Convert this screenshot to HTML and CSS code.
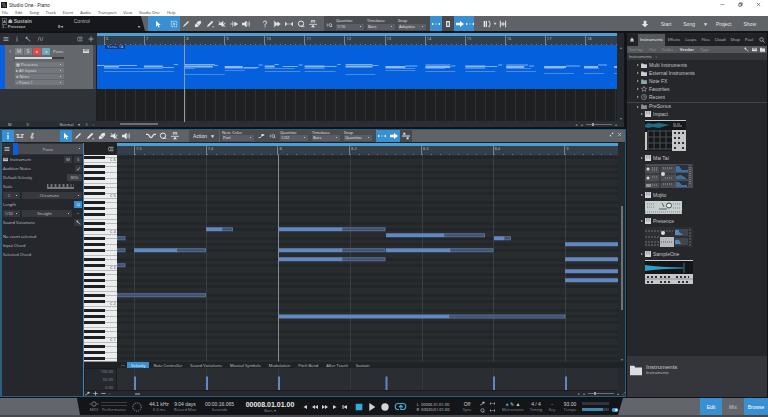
FILE: index.html
```
<!DOCTYPE html>
<html lang="en">
<head>
  <meta charset="UTF-8">
  <meta name="viewport" content="width=device-width, initial-scale=1.0">
  <title>Studio One - Piano</title>
  <link rel="stylesheet" href="styles.css">
</head>
<body>

  <!-- Icon sprite -->
  <svg class="sprite" aria-hidden="true">
    <symbol id="i-arrow" viewBox="0 0 12 12"><path d="M3 1v9l2.300-2 1.500 3.400 1.700-.8L7 7.400h3z" fill="currentColor"/></symbol>
    <symbol id="i-range" viewBox="0 0 12 12"><path d="M2 2h8v8H2z" fill="none" stroke="currentColor" stroke-dasharray="2 1"/><path d="M6 4v4M4 6h4" stroke="currentColor"/></symbol>
    <symbol id="i-pencil" viewBox="0 0 12 12"><path d="M1.500 10.500L3 7.500 9 1.500l1.500 1.500-6 6z" fill="currentColor"/></symbol>
    <symbol id="i-eraser" viewBox="0 0 12 12"><path d="M1 8l5-6 4-1 1 3-5 6-4 1z" fill="currentColor"/><path d="M4 5l3 3" stroke="#5c5f64"/></symbol>
    <symbol id="i-paint" viewBox="0 0 12 12"><path d="M1.500 10.500l1-3 6.500-6.500L11 3 4.500 9.500z" fill="currentColor"/><path d="M9 11h2.500V8.500z" fill="currentColor"/></symbol>
    <symbol id="i-mute" viewBox="0 0 12 12"><path d="M1 5h3l4-4v10L4 7.500H1z" fill="currentColor"/><path d="M1 2l10 8M11 4L7 9" stroke="currentColor" stroke-width="1.300"/></symbol>
    <symbol id="i-bend" viewBox="0 0 12 12"><path d="M0 6h12M4 2v8M7 3l4 3-4 3z" fill="currentColor" stroke="currentColor"/></symbol>
    <symbol id="i-sound" viewBox="0 0 12 12"><path d="M0 4h3l4-3v10L3 8H0z" fill="currentColor"/><path d="M8.500 3.500q2 2.500 0 5M10.500 2q2.500 4 0 8" fill="none" stroke="currentColor"/></symbol>
    <symbol id="i-help" viewBox="0 0 12 12"><path d="M3.500 4q0-2.500 2.500-2.500T8.500 4Q8.500 5.300 6 6.500V8.500M6 9.500V11" fill="none" stroke="currentColor" stroke-width="1.400"/></symbol>
    <symbol id="i-split" viewBox="0 0 12 12"><path d="M2 1v10M3 3l4 3-4 3zM7 3l4 3-4 3z" fill="currentColor" stroke="currentColor"/></symbol>
    <symbol id="i-fit" viewBox="0 0 12 12"><path d="M.5 3v6M11.500 3v6" stroke="currentColor" stroke-width="1.500"/><path d="M1 4l3.500 2L1 8zM11 4L7.500 6 11 8zM5.500 5h1v2h-1z" fill="currentColor"/></symbol>
    <symbol id="i-q" viewBox="0 0 12 12"><circle cx="6" cy="5.500" r="4" fill="none" stroke="currentColor" stroke-width="1.500"/><path d="M6 9.500h5" stroke="currentColor" stroke-width="1.300"/></symbol>
    <symbol id="i-scale" viewBox="0 0 12 12"><path d="M3.500 1v3M6 1v3M8.500 1v3M3 1h6M0 6.500h12" fill="none" stroke="currentColor" stroke-width="1.200"/><path d="M6 7l3 4H3z" fill="currentColor"/></symbol>
    <symbol id="i-divide" viewBox="0 0 12 12"><path d="M0 6h12" stroke="currentColor" stroke-width="1.500"/><path d="M2 1h3v3H2zM7 8h3v3H7z" fill="currentColor"/></symbol>
    <symbol id="i-drum" viewBox="0 0 12 12"><path d="M0 4h5M7 4h5M1 8h10M3 4v4M9 4v4" stroke="currentColor" stroke-width="1.300"/></symbol>
    <symbol id="i-score" viewBox="0 0 12 12"><path d="M6 11V2q3-1 2 2L5 6q-2 3 1 3t2-2" fill="none" stroke="currentColor" stroke-width="1.200"/></symbol>
    <symbol id="i-iq" viewBox="0 0 12 12"><path d="M1.500 3v6" stroke="currentColor" stroke-width="1.200"/><circle cx="7.500" cy="6" r="2.800" fill="none" stroke="currentColor" stroke-width="1.200"/><path d="M8 9h4" stroke="currentColor"/></symbol>
    <symbol id="i-snap" viewBox="0 0 12 12"><path d="M0 4l3 2-3 2zM12 4L9 6l3 2z" fill="currentColor"/><path d="M4.500 6h3" stroke="currentColor" stroke-dasharray="1 1"/></symbol>
    <symbol id="i-follow" viewBox="0 0 12 12"><path d="M0 4h6V1.500L12 6l-6 4.500V8H0z" fill="currentColor"/></symbol>
    <symbol id="i-box" viewBox="0 0 12 12"><path d="M4 2.500h4v7H4z" fill="none" stroke="currentColor" stroke-width="1.800"/></symbol>
    <symbol id="i-marks" viewBox="0 0 12 12"><path d="M2 1.500v9M5 1.500v9" stroke="currentColor" stroke-width="2"/><path d="M8 2h2v3l1.500 1L10 7v3H8" fill="none" stroke="currentColor" stroke-width="1.300"/></symbol>
    <symbol id="i-hgrid" viewBox="0 0 12 12"><path d="M2 1v10M10 1v10M2 6h8M6 3v6" stroke="currentColor" stroke-width="1.500"/></symbol>
    <symbol id="i-down" viewBox="0 0 12 12"><path d="M4 1h4v5h3l-5 5-5-5h3z" fill="currentColor"/></symbol>
    <symbol id="i-menu" viewBox="0 0 12 12"><path d="M1 3h10M1 6h10M1 9h10" stroke="currentColor" stroke-width="1.600"/></symbol>
    <symbol id="i-info" viewBox="0 0 12 12"><path d="M6 1v2M6 4.500V11" stroke="currentColor" stroke-width="1.700"/></symbol>
    <symbol id="i-wrench" viewBox="0 0 12 12"><path d="M2 1l3 1v3l6 5-1 1-6-5-3-1z" fill="currentColor"/></symbol>
    <symbol id="i-curve" viewBox="0 0 12 12"><path d="M0 10C3 10 2 1.500 4 1.500S6 10 8 10s1-8.500 4-8.500" fill="none" stroke="currentColor" stroke-width="1.200"/></symbol>
    <symbol id="i-step" viewBox="0 0 12 12"><path d="M0 9h4l4-5h4" fill="none" stroke="currentColor" stroke-width="1.600"/><path d="M6 2h4v4H6z" fill="currentColor"/></symbol>
    <symbol id="i-wave" viewBox="0 0 12 12"><path d="M0 4h2c2 0 2 4 4 4s2-4 4-4h2" fill="none" stroke="currentColor" stroke-width="1.500"/></symbol>
    <symbol id="i-list" viewBox="0 0 12 12"><path d="M1 2.500h10M4 6h7M1 9.500h10M1 4.500v3" stroke="currentColor" stroke-width="1.500"/></symbol>
    <symbol id="i-plus" viewBox="0 0 12 12"><path d="M6 1v10M1 6h10" stroke="currentColor" stroke-width="1.800"/></symbol>
    <symbol id="i-minus" viewBox="0 0 12 12"><path d="M1 6h10" stroke="currentColor" stroke-width="1.800"/></symbol>
    <symbol id="i-keys" viewBox="0 0 12 12"><path d="M0 2h12v8H0z" fill="currentColor"/><path d="M2.500 2v5M5 2v5M7.500 2v5M10 2v5" stroke="#2a2c30"/></symbol>
    <symbol id="i-search" viewBox="0 0 12 12"><circle cx="5" cy="5" r="3.500" fill="none" stroke="currentColor" stroke-width="1.300"/><path d="M7.500 7.500L11 11" stroke="currentColor" stroke-width="1.600"/></symbol>
    <symbol id="i-home" viewBox="0 0 12 12"><path d="M6 1l4 5H8.500l2 3h-9l2-3H2z" fill="currentColor"/></symbol>
    <symbol id="i-folder" viewBox="0 0 14 12"><path d="M0 1h5l1 2h8v9H0z" fill="currentColor"/></symbol>
    <symbol id="i-star" viewBox="0 0 12 12"><path d="M6 .8l1.500 3.500 3.800.3-2.900 2.500.9 3.700L6 8.800l-3.300 2 .9-3.700L.7 4.600l3.800-.3z" fill="none" stroke="currentColor"/></symbol>
    <symbol id="i-clock" viewBox="0 0 12 12"><circle cx="6" cy="6" r="5" fill="none" stroke="currentColor"/><path d="M6 3v3.500h3" fill="none" stroke="currentColor"/></symbol>
    <symbol id="i-plugin" viewBox="0 0 12 12"><path d="M0 0h12v12H0z" fill="#d4d5d7"/><path d="M3 0v7M6 0v7M9 0v7" stroke="#77797d"/></symbol>
    <symbol id="i-loop" viewBox="0 0 16 12"><path d="M6 10H4Q1 10 1 6t3.500-4h7Q15 2 15 6t-3.500 4H8.500V5.500M6 7l2.500-2.500L11 7" fill="none" stroke="currentColor" stroke-width="1.500"/></symbol>
    <symbol id="i-pop" viewBox="0 0 12 12"><path d="M2 10l3-3M7 5l3-3" stroke="currentColor" stroke-width="1.500"/><path d="M6 2h4v4zM2 6v4h4z" fill="currentColor"/></symbol>
    <symbol id="i-x" viewBox="0 0 12 12"><path d="M2 2l8 8M10 2l-8 8" stroke="currentColor" stroke-width="1.300"/></symbol>
  </svg>

  <div class="app">

    <header class="window-bar">
      <div class="title">
        <svg class="app-icon" viewBox="0 0 6 6"><path d="M0 0h6v6H0z" fill="#1c1e21"/><path d="M1 2h3M2 4h3" stroke="#7b8188"/></svg>
        <span>Studio One - Piano</span>
        <div class="window-buttons">
          <button aria-label="Minimize"><svg viewBox="0 0 12 12"><path d="M1 6h10" stroke="#333"/></svg></button>
          <button aria-label="Restore"><svg viewBox="0 0 12 12"><path d="M2 4h6v6H2zM4 4V2h6v6H8" fill="none" stroke="#333" stroke-width="1.500"/></svg></button>
          <button aria-label="Close"><svg><use href="#i-x"/></svg></button>
        </div>
      </div>
      <nav class="menu">
        <a href="#">File</a><a href="#">Edit</a><a href="#">Song</a><a href="#">Track</a><a href="#">Event</a><a href="#">Audio</a><a href="#">Transport</a><a href="#">View</a><a href="#">Studio One</a><a href="#">Help</a>
      </nav>
    </header>

    <!-- Main toolbar -->
    <div class="toolbar main-toolbar">
      <div class="param-display">
        <div class="param-row"><b><i class="auto">A</i> ☗ Sustain</b><span>Control</span></div>
        <div class="param-row"><span class="param-name">1 - Presence</span><span>8 ▾</span><span class="param-end">▾</span></div>
      </div>
      <div class="tools">
        <button class="tool wide active" aria-label="Arrow"><svg><use href="#i-arrow"/></svg></button>
        <button class="tool active" aria-label="Range"><svg><use href="#i-range"/></svg></button>
        <button class="tool" aria-label="Split"><svg><use href="#i-pencil"/></svg></button>
        <button class="tool" aria-label="Eraser"><svg><use href="#i-eraser"/></svg></button>
        <button class="tool" aria-label="Paint"><svg><use href="#i-paint"/></svg></button>
        <button class="tool" aria-label="Mute"><svg><use href="#i-mute"/></svg></button>
        <button class="tool" aria-label="Bend"><svg><use href="#i-bend"/></svg></button>
        <button class="tool" aria-label="Listen"><svg><use href="#i-sound"/></svg></button>
      </div>
      <div class="tools">
        <button class="tool" aria-label="Info"><svg><use href="#i-help"/></svg></button>
        <button class="tool" aria-label="Strip silence"><svg><use href="#i-split"/></svg></button>
        <button class="tool" aria-label="Fit"><svg><use href="#i-fit"/></svg></button>
        <button class="tool" aria-label="Quantize"><svg><use href="#i-q"/></svg></button>
        <button class="tool" aria-label="Audio bend"><svg><use href="#i-scale"/></svg></button>
      </div>
      <div class="grid-settings">
        <svg class="iq"><use href="#i-iq"/></svg>
        <label>Quantize<select><option>1/16</option></select></label>
        <label>Timebase<select><option>Bars</option></select></label>
        <label>Snap<select><option>Adaptive</option></select></label>
      </div>
      <div class="tools flush">
        <button class="tool active" aria-label="Snap"><svg><use href="#i-snap"/></svg></button>
        <button class="tool dark" aria-label="Event"><svg><use href="#i-box"/></svg></button>
        <button class="tool active" aria-label="Autoscroll"><svg><use href="#i-follow"/></svg></button>
        <button class="tool narrow active" aria-label="Cursor follows"><svg><use href="#i-snap"/></svg></button>
      </div>
      <div class="tools marks">
        <button class="tool" aria-label="Marker"><svg><use href="#i-marks"/></svg></button>
        <span>▼</span>
        <button class="tool" aria-label="Layout"><svg><use href="#i-hgrid"/></svg></button>
      </div>
      <nav class="pages">
        <svg><use href="#i-down"/></svg>
        <a href="#">Start</a><a href="#">Song</a><span>▼</span><a href="#">Project</a><a href="#">Show</a>
      </nav>
    </div>

    <div class="workspace">
      <main class="work">

        <!-- Arrangement -->
        <section class="arrange">
          <div class="track-tools">
            <svg><use href="#i-menu"/></svg><svg><use href="#i-info"/></svg><svg><use href="#i-wrench"/></svg><svg class="curve"><use href="#i-curve"/></svg>
            <svg class="push"><use href="#i-list"/></svg><svg><use href="#i-plus"/></svg>
          </div>
          <div class="ruler song-ruler">
            <span>6</span><span>7</span><span>8</span><span>9</span><span>10</span><span>11</span><span>12</span><span>13</span><span>14</span><span>15</span><span>16</span><span>17</span><span>18</span>
          </div>
          <div class="corner"></div>

          <div class="track-list">
            <div class="track">
              <div class="track-head">
                <span class="track-no">1</span>
                <button class="sq">M</button><button class="sq">S</button>
                <button class="sq rec" aria-label="Record">●</button><button class="sq mon" aria-label="Monitor">◂</button>
                <span class="track-name">Piano</span>
                <svg class="push"><use href="#i-keys"/></svg>
              </div>
              <div class="fader"></div>
              <select aria-label="Instrument"><option>▦ Presence</option></select>
              <select aria-label="Input"><option>▸ All Inputs</option></select>
              <select aria-label="Output"><option>● None</option></select>
              <select aria-label="Patch"><option>♪ Piano 1</option></select>
            </div>
          </div>
          <div class="lanes">
            <div class="clip">
              <span class="clip-name">Verse 1A</span>
              <svg viewBox="0 0 521 44" preserveAspectRatio="none" stroke="#7fb0f3" fill="none">
                <path class="strong" d="M7 21.500h15M47 21.500h19M88 21.500h28M128 22h18M168 21.500h10M208 21.500h20M249 21.500h27M289 22h20M329 22h25M369 21.500h20M410 22h18M448 22h22M488 22h14M518 22h3"/>
                <path d="M0 20.500h7M22 20.500h18M66 22.500h11M77 19.500h4M88 19.500h30M117 20.500h4M147 22.500h15M162 20h4M178 19.500h4M186 21.500h15M202 20h4M228 21.500h12M241 19.500h3M249 19.500h27M276 20.500h6M309 21h12M329 20h25M355 21h4M389 21.500h12M402 20h4M410 20h22M433 21h5M470 21h14M502 20h9"/>
                <path class="faint" d="M7 23.500h59M7 26.500h70M47 23.500h15M88 23.500h10M88 29.500h40M128 23.500h32M128 25.500h20M168 23.500h30M168 26.500h36M208 23.500h20M208 26.500h31M249 29.500h30M289 23.500h30M289 25.500h30M329 23.500h20M329 26.500h30M369 23.500h20M369 26.500h30M410 23.500h25M410 26.500h30M448 23.500h20M448 28.500h30M488 23.500h15M488 28.500h20M518 28.500h3"/>
              </svg>
            </div>
          </div>
          <div class="scroll-v"><span>▴</span><span>▾</span></div>

          <div class="track-foot"><span>M</span><span>S</span><span class="push">Normal</span><span>▾</span><span>≡</span><span>‹</span></div>
          <div class="scroll-h"><i class="thumb"></i><span class="push">▸</span><span>▴</span><i class="zoom-line"></i><span>▴</span></div>
          <div class="corner foot"></div>
        </section>

        <!-- Piano editor -->
        <section class="editor">
          <div class="toolbar editor-toolbar">
            <div class="tools">
              <button class="tool active" aria-label="Piano view"><svg><use href="#i-info"/></svg></button>
              <button class="tool" aria-label="Drum view"><svg><use href="#i-drum"/></svg></button>
              <button class="tool" aria-label="Score view"><svg><use href="#i-score"/></svg></button>
            </div>
            <div class="tools">
              <button class="tool active" aria-label="Arrow"><svg><use href="#i-arrow"/></svg></button>
              <button class="tool" aria-label="Draw"><svg><use href="#i-pencil"/></svg></button>
              <button class="tool" aria-label="Paint"><svg><use href="#i-paint"/></svg></button>
              <button class="tool" aria-label="Eraser"><svg><use href="#i-eraser"/></svg></button>
              <button class="tool" aria-label="Mute"><svg><use href="#i-mute"/></svg></button>
              <button class="tool" aria-label="Listen"><svg><use href="#i-sound"/></svg></button>
            </div>
            <div class="tools shapes">
              <button class="tool" aria-label="Curve"><svg class="wave"><use href="#i-wave"/></svg></button>
              <button class="tool" aria-label="Quantize"><svg><use href="#i-q"/></svg></button>
              <button class="tool" aria-label="Transpose"><svg><use href="#i-scale"/></svg></button>
            </div>
            <button class="action">Action <span>▼</span></button>
            <div class="grid-settings">
              <label class="note-color">Note Color<select><option>Part</option></select></label>
              <svg class="iq"><use href="#i-step"/></svg>
              <svg class="iq"><use href="#i-iq"/></svg>
              <label>Quantize<select><option>1/32</option></select></label>
              <label>Timebase<select><option>Bars</option></select></label>
              <label>Snap<select><option>Quantize</option></select></label>
            </div>
            <div class="tools flush">
              <button class="tool active" aria-label="Snap"><svg><use href="#i-snap"/></svg></button>
              <button class="tool active" aria-label="Autoscroll"><svg><use href="#i-follow"/></svg></button>
              <button class="tool dark" aria-label="Split view"><svg><use href="#i-divide"/></svg></button>
            </div>
            <div class="editor-close">
              <svg><use href="#i-pop"/></svg><svg><use href="#i-x"/></svg>
            </div>
          </div>

          <aside class="inspector">
            <div class="part"><svg><use href="#i-menu"/></svg><i></i><select aria-label="Part"><option>Piano</option></select></div>
            <div class="row"><svg><use href="#i-keys"/></svg><span>Instrument</span><button class="push">M</button><button>S</button></div>
            <div class="row"><label for="audition">Audition Notes</label><input class="push" type="checkbox" id="audition" checked></div>
            <div class="row"><label for="velocity">Default Velocity</label><input class="push" type="text" id="velocity" value="80%"></div>
            <div class="row"><span>Scale</span><svg class="push mini-keys" viewBox="0 0 27 5"><path d="M0 0h27v5H0z" fill="#74777c"/><path d="M2.500 0v3M6.500 0v3M10.500 0v3M14.500 0v3M18.500 0v3M22.500 0v3M25.500 0v3" stroke="#202226" stroke-width="2"/></svg></div>
            <div class="row pair"><select aria-label="Root"><option>C</option></select><select aria-label="Scale"><option>Chromatic</option></select></div>
            <div class="row"><span>Length</span><button class="push on">Q</button></div>
            <div class="row pair"><select aria-label="Length"><option>1/32</option></select><select aria-label="Feel"><option>Straight</option></select><span class="dot">•</span></div>
            <div class="row"><span>Sound Variations</span><button class="push" aria-label="Edit variations"><svg><use href="#i-wrench"/></svg></button></div>
            <div class="row event">No event selected</div>
            <div class="row">Input Chord</div>
            <div class="row">Selected Chord</div>
          </aside>

          <div class="roll">
            <div class="keys-head"><svg><use href="#i-list"/></svg></div>
            <div class="ruler beat-ruler"><span>7.3</span><span>7.4</span><span>8</span><span>8.2</span><span>8.3</span><span>8.4</span><span>9</span></div>
            <div class="corner"></div>

            <svg class="keyboard">
              <defs>
                <pattern id="octave" width="33" height="36" y="7" patternUnits="userSpaceOnUse">
                  <path d="M0 0h33v36H0z" fill="#eceded"/>
                  <path d="M0 4.500h33M0 10.500h33M0 16.500h33M0 21.500h33M0 25.500h33M0 31.500h33M0 .5h33" stroke="#b9bbbe"/>
                  <path d="M0 3h21v3H0zM0 9h21v3H0zM0 15h21v3H0zM0 24h21v3H0zM0 30h21v3H0z" fill="#1d1f22"/>
                </pattern>
              </defs>
              <rect width="100%" height="100%" fill="url(#octave)"/>
              <g class="key-names"><text x="26" y="6">C 6</text><text x="26" y="42">C 5</text><text x="26" y="78">C 4</text><text x="26" y="114">C 3</text><text x="26" y="150">C 2</text><text x="26" y="186">C 1</text></g>
            </svg>
            <div class="notes">
              <svg viewBox="0 0 501 206" preserveAspectRatio="none">
                <g stroke="#3a3e42"><path d="M17.500 0v206M89.500 0v206M233.500 0v206M305.500 0v206M376.500 0v206M448.500 0v206"/></g>
                <!-- note body, lower velocity shade -->
                <g fill="#40506d" stroke="#55709c" stroke-width="1">
                  <path d="M0 81.500h8v3H0zM0 93.500h8v3H0zM0 108.500h8v3H0zM0 138.500h88.500v3H0z"/>
                  <path d="M105 72.500h10.500v3H105zM59 93.500h29.500v3H59zM225 72.500h43v3h-43zM327 78.500h40.500v3H327zM387 81.500h6.500v3H387zM225 93.500h43v3h-43zM333 93.500h43v3h-43zM225 102.500h43v3h-43zM332 159.500h116v3H332z"/>
                </g>
                <g fill="#6188c1">
                  <path d="M89 72h16v4H89zM17 93h43v4H17zM161 72h64v4h-64zM269 78h58v4h-58zM377 81h10v4h-10zM161 93h64v4h-64zM269 93h64v4h-64zM161 102h64v4h-64zM161 159h171v4H161z"/>
                  <path d="M448 87h53v4h-53zM448 102h53v4h-53zM448 114h53v4h-53zM448 123h53v4h-53z"/>
                </g>
                <path d="M161.500 0v206" stroke="#888b90"/>
              </svg>
            </div>
            <div class="scroll-v"><i></i><span>▾</span></div>

            <div class="lane-tabs">
              <span>—</span><button class="active">Velocity</button><button>Note Controller</button><button>Sound Variations</button><button>Musical Symbols</button><button>Modulation</button><button>Pitch Bend</button><button>After Touch</button><button>Sustain</button>
            </div>

            <div class="lane-scale"><span>100.00</span><span>50.00</span><span>0.00</span></div>
            <div class="velocity">
              <svg viewBox="0 0 501 23" preserveAspectRatio="none">
                <path d="M17.500 0v23M89.500 0v23M161.500 0v23M233.500 0v23M305.500 0v23M376.500 0v23M448.500 0v23" stroke="#34383c"/>
                <path d="M18 9v14M90 9v14M162 9v14M269.500 9v14M377 9v14M449 9v14" stroke="#6188c1" stroke-width="2"/>
              </svg>
            </div>
            <div class="corner"></div>

            <div class="lane-foot"><svg><use href="#i-step"/></svg><svg><use href="#i-plus"/></svg><svg><use href="#i-minus"/></svg><span>‹</span></div>
            <div class="scroll-h lane-scroll"><i class="thumb"></i><span class="push">▸</span><span>▴</span><i class="zoom-line"></i><span>▴</span><span>⤢</span></div>
          </div>
        </section>
      </main>

      <!-- Browser -->
      <aside class="browser">
        <nav class="browser-tabs">
          <svg><use href="#i-home"/></svg>
          <a href="#" class="active">Instruments</a><a href="#">Effects</a><a href="#">Loops</a><a href="#">Files</a><a href="#">Cloud</a><a href="#">Shop</a><a href="#">Pool</a>
          <svg class="push"><use href="#i-search"/></svg>
        </nav>
        <div class="sort"><span>Sort by:</span><a href="#">Flat</a><a href="#">Folder</a><a href="#" class="active">Vendor</a><a href="#">Type</a><svg class="push"><use href="#i-wrench"/></svg><svg><use href="#i-keys"/></svg><svg><use href="#i-folder"/></svg></div>
        <div class="crumb">Instruments <span>›</span></div>
        <ul class="tree">
          <li><svg class="folder"><use href="#i-folder"/></svg>Multi Instruments</li>
          <li><svg class="folder"><use href="#i-folder"/></svg>External Instruments</li>
          <li><svg class="folder fx"><use href="#i-folder"/></svg>Note FX</li>
          <li><svg><use href="#i-star"/></svg>Favorites</li>
          <li><svg><use href="#i-clock"/></svg>Recent</li>
          <li class="vendor"><svg class="folder dim"><use href="#i-folder"/></svg>PreSonus</li>
        </ul>
        <ul class="tree plugins">
          <li><svg><use href="#i-plugin"/></svg>Impact</li>
        </ul>
        <svg class="thumb-img" width="41" height="31" viewBox="0 0 41 31">
          <path d="M0 0h41v31H0z" fill="#15181b"/><path d="M0 0h41v1H0z" fill="#c9cbcd"/>
          <path d="M0 5l3-2 5 1 6-1 6 1 5 1-5 1-6 2-6-1-5 1-3-1z" fill="#1e6d84"/>
          <path d="M28 4h3M32 4h3M28 6h9" stroke="#8c9094"/>
          <path d="M0 12h2v18H0zM27 10h14v21H27z" fill="#c5c7c9"/>
          <path d="M3 10v20M9 10v20M15 10v20M21 10v20M3 11h24M3 17h24M3 23h24M3 29h24" stroke="#4b4f54"/>
          <path d="M29 13h2M33 13h2M37 13h2M29 18h2M33 18h2M29 23h2M33 23h2M37 23h2M29 28h2M37 28h2" stroke="#303236" stroke-width="2"/>
        </svg>
        <ul class="tree plugins">
          <li><svg><use href="#i-plugin"/></svg>Mai Tai</li>
        </ul>
        <svg class="thumb-img" width="48" height="24" viewBox="0 0 48 24">
          <path d="M0 0h48v24H0z" fill="#4a4d53"/><path d="M0 0h48v2H0zM15 2v22M0 10h30M0 18h30" fill="#6a6d72" stroke="#2c2e32"/>
          <path d="M31 1h12v7H31zM31 9h12v6H31zM31 17h12v6H31z" fill="#2b3138"/>
          <path d="M31 2h3l3 4h6v2H31zM31 12l5-1 5 3v1H31zM31 18h3l3 3h5v2H31z" fill="#416f9e"/>
          <g fill="#d8d9db"><circle cx="3" cy="5" r="1.500"/><circle cx="3" cy="14" r="1.500"/><circle cx="18" cy="10" r="2"/><path d="M1 20h5v3H1z" opacity=".5"/></g>
          <path d="M7 4h6M7 6h5M18 4h10M20 14h8M7 13h6M7 21h6M18 20h10M45 3v18" stroke="#96999e" stroke-dasharray="1 1"/>
        </svg>
        <ul class="tree plugins">
          <li><svg><use href="#i-plugin"/></svg>Mojito</li>
        </ul>
        <svg class="thumb-img" width="37" height="13" viewBox="0 0 37 13">
          <path d="M0 0h37v13H0z" fill="#c8cfcf"/><path d="M0 11h37M2 3h8M2 6h8M28 3h7M28 7h7" stroke="#7c8585" stroke-dasharray="1 1"/>
          <circle cx="24" cy="4.500" r="2.500" fill="#edf0f0" stroke="#3d4343"/><path d="M17 2l2 4M14 8h8" stroke="#536060"/>
        </svg>
        <ul class="tree plugins">
          <li><svg><use href="#i-plugin"/></svg>Presence</li>
        </ul>
        <svg class="thumb-img" width="48" height="20" viewBox="0 0 48 20">
          <path d="M0 0h48v20H0z" fill="#2c2f33"/><path d="M0 4h28M0 10h14M0 15h14M0 18h14M45 2v17" stroke="#6c7075" stroke-dasharray="2 1"/>
          <path d="M15 10h14v10H15z" fill="#b7b9bb"/><path d="M16 15h11" stroke="#55585c" stroke-dasharray="1 1"/>
          <path d="M30 2h13v7H30zM30 11h13v7H30z" fill="#41464d"/><path d="M30 3h4v2l4 3h-8zM30 13h4l2 4h-6z" fill="#5487ba"/><circle cx="18" cy="6" r="2" fill="#dedfe0"/>
        </svg>
        <ul class="tree plugins">
          <li><svg><use href="#i-plugin"/></svg>SampleOne</li>
        </ul>
        <svg class="thumb-img" width="48" height="24" viewBox="0 0 48 24">
          <path d="M0 0h48v24H0z" fill="#12161a"/><path d="M0 0h48v1H0z" fill="#c9cbcd"/>
          <path d="M0 5l8 1 12 1 18 .5v1L20 9 8 10l-8 1z" fill="#2f9dc4"/><path d="M39 3v10" stroke="#31424c" stroke-width="2"/>
          <path d="M0 14h48v10H0z" fill="#c5c7c9"/><path d="M0 19h48" stroke="#8f9296"/>
          <path d="M2 17h10M15 17h12M31 17h13M2 22h6M15 22h12M33 22h12" stroke="#303236" stroke-width="2" stroke-dasharray="2 2"/>
        </svg>
        <div class="info">
          <svg><use href="#i-folder"/></svg>
          <div><strong>Instruments</strong><small>Instruments</small></div>
        </div>
      </aside>
    </div>

    <!-- Transport -->
    <footer class="transport">
      <div class="bar">
        <div class="cell midi"><svg viewBox="0 0 12 6"><circle cx="6" cy="3" r="2.200" fill="none" stroke="#777"/><path d="M1 3h2M9 3h2" stroke="#555"/></svg><small>MIDI</small></div>
        <div class="cell perf"><i></i><small>Performance</small></div>
        <svg class="ring" viewBox="0 0 12 12"><circle cx="6" cy="6" r="5" fill="none" stroke="#a5a7aa" stroke-dasharray="1.500 1"/></svg>
        <div class="cell rate"><span>44.1 kHz</span><small>0.0 ms</small></div>
        <div class="cell days"><span>9:04 days</span><small>Record Max</small></div>
        <div class="cell secs"><span>00:00:16.065</span><small>Seconds</small></div>
        <div class="cell counter"><strong>00008.01.01.00</strong><small>Bars ▾</small></div>
        <div class="buttons">
          <button aria-label="Previous"><svg viewBox="0 0 12 12"><path d="M10 2v8L3 6z" fill="currentColor"/></svg></button>
          <button aria-label="Rewind"><svg viewBox="0 0 12 12"><path d="M6 2v8L0 6zM12 2v8L6 6z" fill="currentColor"/></svg></button>
          <button aria-label="Forward"><svg viewBox="0 0 12 12"><path d="M0 2v8l6-4zM6 2v8l6-4z" fill="currentColor"/></svg></button>
          <button aria-label="Next"><svg viewBox="0 0 12 12"><path d="M2 2v8l7-4z" fill="currentColor"/></svg></button>
          <button aria-label="Return to zero"><svg viewBox="0 0 12 12"><path d="M1 2h2v8H1zM10 2v8L3 6z" fill="currentColor"/></svg></button>
        </div>
        <div class="buttons big">
          <button aria-label="Stop" class="stop"><svg viewBox="0 0 12 12"><path d="M1 1h10v10H1z" fill="currentColor"/></svg></button>
          <button aria-label="Play"><svg viewBox="0 0 12 12"><path d="M2 0v12l9-6z" fill="currentColor"/></svg></button>
          <button aria-label="Record"><svg viewBox="0 0 12 12"><circle cx="6" cy="6" r="5.500" fill="currentColor"/></svg></button>
          <button aria-label="Loop" class="loop"><svg><use href="#i-loop"/></svg></button>
        </div>
        <div class="cell range"><span>L &nbsp;00006.01.01.00</span><span>R &nbsp;00020.01.01.00</span></div>
        <div class="cell sync"><span>Off</span><small>Sync</small></div>
        <div class="punch"><svg><use href="#i-step"/></svg><svg><use href="#i-fit"/></svg><svg><use href="#i-q"/></svg><svg><use href="#i-fit"/></svg></div>
        <div class="cell metro"><span><i>●</i> ✎ ▲</span><small>Metronome</small></div>
        <div class="cell timing"><span>4 / 4</span><small>Timing</small></div>
        <div class="cell key"><span>-</span><small>Key</small></div>
        <div class="cell tempo"><span>93.00</span><small>Tempo</small></div>
        <div class="level"><i></i><b></b></div>
        <svg class="toggle" viewBox="0 0 12 8"><rect x="1" y="1" width="10" height="6" rx="3" fill="#3aa0cf"/><circle cx="8" cy="4" r="2" fill="#e6eef2"/></svg>
      </div>
      <nav class="views"><button class="active">Edit</button><button>Mix</button><button class="active">Browse</button></nav>
    </footer>
  </div>

</body>
</html>
```
FILE: styles.css
```
* { box-sizing: border-box; }
body {
  margin: 0;
  background: #47494d;
  font: 4px/5px "Open Sans", "Liberation Sans", Arial, sans-serif;
  color: #c4c6c9;
}
a { color: inherit; text-decoration: none; }
button, select, input {
  margin: 0;
  padding: 0;
  border: 0;
  border-radius: 0;
  background: none;
  color: inherit;
  font: inherit;
  appearance: none;
}
button { display: flex; align-items: center; justify-content: center; }
select {
  background: #74777d;
  padding: 0 6px 0 1px;
  background-image: linear-gradient(to bottom right, #c2c4c7 50%, transparent 50%);
  background-position: right 2px center;
  background-size: 2px 2px;
  background-repeat: no-repeat;
}
svg { display: block; width: 6px; height: 6px; flex: none; }
i, small, strong, b { font-style: normal; }
.sprite { position: absolute; width: 0; height: 0; }
.push { margin-left: auto; }

.app {
  display: flex;
  flex-direction: column;
  height: 100vh;
  padding-bottom: 2px;
  white-space: nowrap;
}

/* window */
.window-bar {
  height: 16px;
  flex: none;
  background: #fff;
  color: #333;
}
.title { display: flex; align-items: center; gap: 2px; height: 9px; padding-left: 1px; font: 5px Roboto, sans-serif; }
.window-buttons { display: flex; gap: 13px; margin-left: auto; padding-right: 7px; }
.window-buttons svg { width: 5px; height: 5px; }
.menu { display: flex; gap: 7px; height: 7px; padding-left: 2px; line-height: 7px; }

/* toolbars */
.toolbar { display: flex; background: #5f6267; color: #e4e5e6; }
.main-toolbar { height: 17px; flex: none; border-bottom: 2px solid #111316; }
.param-display {
  width: 145px;
  padding: 3px 5px 1px 2px;
  background: #17181b;
  clip-path: polygon(0 0, 141px 0, 100% 100%, 0 100%);
  color: #b4b6b9;
}
.param-row { display: flex; gap: 42px; font: 5px/5px "Liberation Sans", sans-serif; }
.param-row + .param-row { gap: 0; font-size: 4px; font-weight: bold; }
.param-name { width: 56px; }
.param-end { margin-left: auto; }
.auto { border: 1px solid #55585c; font-size: 4px; }
.tools { display: flex; margin-left: 3px; }
.tools + .tools { margin-left: 7px; }
.tool { width: 12px; }
.tool.wide { width: 20px; }
.tool.narrow { width: 8px; }
.tool.dark { background: #46494e; }
.active { background: #3990d0; color: #fff; }
.tools .tool svg { width: 8px; height: 8px; }
.tools .tool .wave { width: 10px; height: 10px; }
.grid-settings { display: flex; gap: 3px; background: #494c51; padding: 2px 4px 0 2px; margin-left: 5px; }
.grid-settings label { display: flex; flex-direction: column; gap: 1px; width: 28px; }
.grid-settings label select { height: 6px; line-height: 6px; background-color: #5a5d63; }
.iq { align-self: center; width: 7px; }
.tools.flush { margin-left: 0; }
.marks { align-items: center; }
.pages { display: flex; align-items: center; gap: 12px; margin-left: auto; padding-right: 12px; font: 5px "Liberation Sans", sans-serif; }
.pages svg { width: 8px; height: 8px; }
.pages span { margin: 0 -4px; }

.workspace { flex: 1; min-height: 0; display: flex; background: #111316; }
.work { flex: 1; min-width: 0; display: flex; flex-direction: column; }

/* arrangement */
.arrange {
  display: grid;
  grid-template-columns: 97px minmax(0, 1fr) 7px;
  grid-template-rows: 12px minmax(0, 77fr) 6px;
  flex: 95;
  min-height: 0;
  margin-right: 2px;
  background: #25282c;
}
.track-tools { display: flex; align-items: center; gap: 5px; padding: 0 3px; background: #2b2e32; color: #a5a8ab; }
.track-tools .curve { width: 9px; }
.ruler {
  display: grid;
  border-top: 3px solid #4ca0d8;
  background-color: #33404b;
  color: #b9c3cb;
}
.ruler span {
  border-left: 1px solid #77838d;
  padding-left: 1px;
  line-height: 5px;
  background: repeating-linear-gradient(90deg, #6d7983 0 1px, transparent 1px 5px) 0 100% / 100% 1px no-repeat;
}
.song-ruler {
  grid-template-columns: repeat(12, 5fr) 4fr;
  padding-left: 7px;
}
.corner { background: #25282c; }
.corner.foot { background: #2b2e32; }
.track-list { background: #2f3236; border-right: 1px solid #1b1d20; }
.track {
  display: flex;
  flex-direction: column;
  gap: 1px;
  height: 44px;
  padding: 2px 3px 0 10px;
  border-left: 5px solid #0a5fe0;
  border-right: 3px solid #46494d;
  background: #64676c;
  color: #dedfe0;
}
.track-head { display: flex; align-items: center; gap: 1px; height: 8px; margin-left: -6px; margin-bottom: 1px; }
.track-no { width: 5px; }
.track-name { margin-left: 2px; }
.track-head svg { width: 8px; }
.sq { width: 8px; height: 7px; background: #7b7e83; font-size: 5px; }
.sq.rec { background: #e04a4c; font-size: 4px; }
.sq.mon { background: #67a9b8; font-size: 4px; }
.fader { width: 49px; height: 2px; margin-bottom: 2px; background: linear-gradient(90deg, #d7d8d9 75%, #3c3e42 75%); }
.track select { width: 49px; height: 5px; line-height: 5px; }
.lanes {
  background-color: #1e2022;
  background-image: repeating-linear-gradient(90deg, #2e3133 0 1px, transparent 1px 10px);
  background-position: 8px 0;
}
.clip { position: relative; height: 44px; background: #0560dd; }
.clip svg { width: 100%; height: 44px; }
.clip .strong { stroke: #8fb9f2; stroke-width: 2; }
.clip .faint { stroke: #4a8cea; }
.clip-name { position: absolute; left: 8px; top: 0; padding: 0 2px; background: #083a86; color: #b4cdf0; line-height: 4px; }
.lanes::after {
  content: "";
  position: absolute;
  left: 184px;
  top: 45px;
  width: 1px;
  height: 77px;
  background: #8d9aa8;
}
.scroll-v { display: flex; flex-direction: column; justify-content: space-between; align-items: center; background: #25282c; color: #84878a; }
.track-foot { display: flex; align-items: center; gap: 5px; padding: 0 3px 0 8px; background: #2b2e32; }
.track-foot span:nth-child(2) { margin-left: 10px; }
.scroll-h { display: flex; align-items: center; gap: 3px; background: #2b2e32; color: #8b8e91; }
.thumb { width: 38px; height: 2px; margin-left: 23px; background: #6c6f73; }
.zoom-line { width: 26px; height: 3px; background: linear-gradient(90deg, transparent 25%, #9a9da0 25% 29%, transparent 29%), linear-gradient(#6c6f73, #6c6f73) 0 1px / 100% 1px no-repeat; }

/* editor */
.editor {
  display: grid;
  grid-template-columns: 82px minmax(0, 1fr);
  grid-template-rows: 13px minmax(0, 1fr);
  flex: 267;
  min-height: 0;
  margin-top: 2px;
  border: 1px solid #2b5f7f;
  border-left-width: 2px;
  background: #25282c;
}
.editor-toolbar { grid-column: 1 / -1; border-bottom: 1px solid #1d1f22; }
.editor-toolbar .tools { margin-left: 0; }
.editor-toolbar .tools + .tools { margin-left: 22px; }
.editor-toolbar .tools + .shapes { margin-left: 13px; }
.editor-toolbar .tools.flush { margin-left: 0; }
.action { gap: 3px; width: 30px; margin-left: 8px; background: #4b4e53; font: 5px "Liberation Sans", sans-serif; }
.editor-toolbar .grid-settings { gap: 4px; margin-left: 1px; padding-top: 0; }
.editor-toolbar .grid-settings label { gap: 0; }
.editor-toolbar .note-color { width: 32px; }
.editor-close { display: flex; gap: 3px; margin-left: auto; padding: 2px 3px 0 0; }
.editor-close svg { width: 5px; height: 5px; }

.inspector { background: #25272c; border-right: 1px solid #3787bd; }
.part { display: flex; height: 12px; align-items: center; background: #2f3236; }
.part svg { margin: 0 3px 0 2px; }
.part i { width: 5px; height: 12px; background: #0a5fe0; }
.part select { flex: 1; height: 10px; background-color: #484b50; text-align: center; }
.row { display: flex; align-items: center; gap: 2px; height: 9px; padding: 0 1px; }
.row button { width: 8px; height: 7px; background: #34373c; }
.row .on { background: #3990d0; color: #fff; }
.row svg { width: 5px; height: 5px; }
.row .mini-keys { width: 27px; margin-right: 8px; }
.row input[type="checkbox"] { width: 7px; height: 7px; background: #33363a; }
.row input[type="checkbox"]:checked::before { content: "✓"; display: block; text-align: center; font: 6px/7px "DejaVu Sans", sans-serif; }
.row input[type="text"] { width: 15px; height: 7px; background: #3c3f44; text-align: center; }
.row.pair select { height: 7px; background-color: #35383d; width: 17px; text-align: center; }
.row.pair select + select { flex: 1; }
.row .dot { width: 8px; text-align: center; }
.row.event { margin-top: 5px; }

.roll {
  display: grid;
  grid-template-columns: 33px minmax(0, 1fr) 7px;
  grid-template-rows: 12px minmax(0, 1fr) 6px 23px 5px;
}
.keys-head { display: flex; align-items: center; justify-content: flex-end; padding-right: 3px; background: #202226; }
.beat-ruler { grid-template-columns: repeat(6, 4fr) 3fr; padding-left: 17px; }
.beat-ruler span { background-image: repeating-linear-gradient(90deg, #6d7983 0 1px, transparent 1px 9px); }
.keyboard { width: 33px; height: 100%; }
.key-names { font-size: 4px; fill: #444; }
.notes {
  /* one band per semitone, black keys darker */
  background: linear-gradient(#292c2f 3px, #232629 3px 6px, #292c2f 6px 9px, #232629 9px 12px, #292c2f 12px 15px, #232629 15px 18px, #292c2f 18px 24px, #232629 24px 27px, #292c2f 27px 30px, #232629 30px 33px, #292c2f 33px 36px) 0 7px / 100% 36px;
}
.notes svg, .velocity svg { width: 100%; height: 100%; }
.roll .scroll-v i { width: 2px; height: 104px; margin-top: 51px; background: #707376; }
.lane-tabs { grid-column: 1 / -1; display: flex; align-items: stretch; gap: 8px; padding-left: 37px; background: #202326; }
.lane-tabs .active { padding: 0 4px; margin: 0 -4px 0 -6px; }
.lane-scale { display: flex; flex-direction: column; justify-content: space-between; align-items: flex-end; padding-right: 3px; border: 1px solid #1a1c1f; color: #8d9093; }
.velocity { border-bottom: 1px solid #1a1c1f; background: #2a2d31; }
.lane-foot { display: flex; align-items: center; gap: 3px; padding-left: 1px; }
.lane-foot svg { width: 5px; height: 5px; }
.lane-scroll { grid-column: 2 / -1; background: none; }
.lane-scroll .thumb { width: 5px; margin-left: 18px; }

/* browser */
.browser { display: flex; flex-direction: column; width: 141px; flex: none; margin-left: 1px; background: #26272b; border-right: 1px solid #111316; }
.browser-tabs { display: flex; align-items: center; gap: 5px; height: 12px; margin-top: 1px; padding: 0 2px; background: #202226; }
.browser-tabs a { line-height: 12px; }
.browser-tabs .active { margin: 0 -2px; padding: 0 2px; background: #55585d; }
.sort { display: flex; align-items: center; gap: 6px; height: 7px; padding: 0 2px; background: #55585d; color: #96999d; }
.sort .active { background: none; font-weight: bold; color: #d6d7d8; }
.sort svg { width: 5px; height: 5px; margin-left: -3px; color: #e0e0e0; }
.sort svg.push { margin-left: auto; }
.crumb { height: 7px; margin-bottom: 1px; padding: 1px 2px; background: #34363b; }
.crumb span { margin-left: 3px; }
.tree { list-style: none; margin: 0; padding: 0; font-family: "Liberation Sans", sans-serif; font-size: 5px; }
.tree li { display: flex; align-items: center; gap: 2px; height: 8px; padding-left: 10px; }
.tree li::before { content: ""; border: 1px solid transparent; border-left: 2px solid #a9abae; border-right: 0; }
.tree .folder { height: 5px; color: #d0d1d3; }
.tree .fx { color: #8ba99c; }
.tree .dim { color: #8b8e92; }
.tree .vendor { border-top: 1px solid #424449; margin-top: 1px; }
.plugins li { padding-left: 14px; }
.thumb-img { width: auto; height: auto; align-self: flex-start; margin: 2px 0 3px 18px; }
.info { display: flex; align-items: flex-start; gap: 4px; height: 41px; margin-top: auto; padding: 8px 3px; background: #34363c; }
.info svg { width: 12px; height: 12px; color: #dcdde0; }
.info div { display: flex; flex-direction: column; }
.info strong { font: 6px/6px "Liberation Sans", sans-serif; }
.info small { font-size: 4px; }

/* transport */
.transport { display: flex; flex: none; height: 18px; border-top: 1px solid #111316; background: #62656c; }
.bar {
  display: flex;
  align-items: center;
  flex: 1;
  min-width: 0;
  margin-left: 77px;
  padding-left: 11px;
  background: #141518;
  clip-path: polygon(0 0, 100% 0, calc(100% - 5px) 100%, 3px 100%);
}
.cell { display: flex; flex-direction: column; align-items: center; flex: none; }
.cell span { font: 5px/6px "Liberation Sans", sans-serif; color: #d0d1d3; }
.cell small { font-size: 4px; line-height: 5px; color: #8f9194; }
.midi { width: 12px; }
.midi svg { width: 12px; }
.perf { width: 28px; }
.perf i { width: 26px; height: 4px; margin: 1px 0; border: solid #3a3c40; border-width: 1px 0; }
.ring { width: 10px; height: 10px; margin: 0 4px; }
.rate, .days { width: 26px; }
.secs { width: 43px; }
.counter { width: 58px; }
.counter strong { font: bold 7px/7px "Liberation Sans", sans-serif; color: #e9eaea; }
.buttons { display: flex; gap: 4px; padding-left: 3px; color: #d3d4d6; }
.buttons.big { gap: 5px; padding-left: 7px; align-items: center; }
.big svg { width: 8px; height: 8px; }
.stop { color: #36aad6; }
.loop { color: #43a9cd; }
.loop svg { width: 13px; height: 9px; }
.range { width: 52px; }
.range span { font: 4px/5px "Open Sans", sans-serif; }
.sync { width: 16px; }
.punch { display: grid; grid-template-columns: repeat(2, 5px); gap: 2px 5px; padding: 0 5px; }
.punch svg { width: 5px; height: 5px; }
.metro { width: 26px; }
.metro i { color: #53a9dd; }
.timing { width: 20px; }
.key { width: 12px; }
.tempo { width: 24px; }
.level { display: flex; flex-direction: column; gap: 3px; width: 27px; }
.level i { height: 3px; background: #33353a; }
.level b { height: 3px; background: linear-gradient(90deg, #3e87ad 78%, #2b3c47 78%); }
.toggle { width: 8px; margin: 6px 2px 0; }
.views { display: flex; flex: none; margin-left: 77px; color: #c8c9cc; }
.views button { width: 22px; font: 5px "Liberation Sans", sans-serif; }
.views button:last-child { width: 24px; }
```
